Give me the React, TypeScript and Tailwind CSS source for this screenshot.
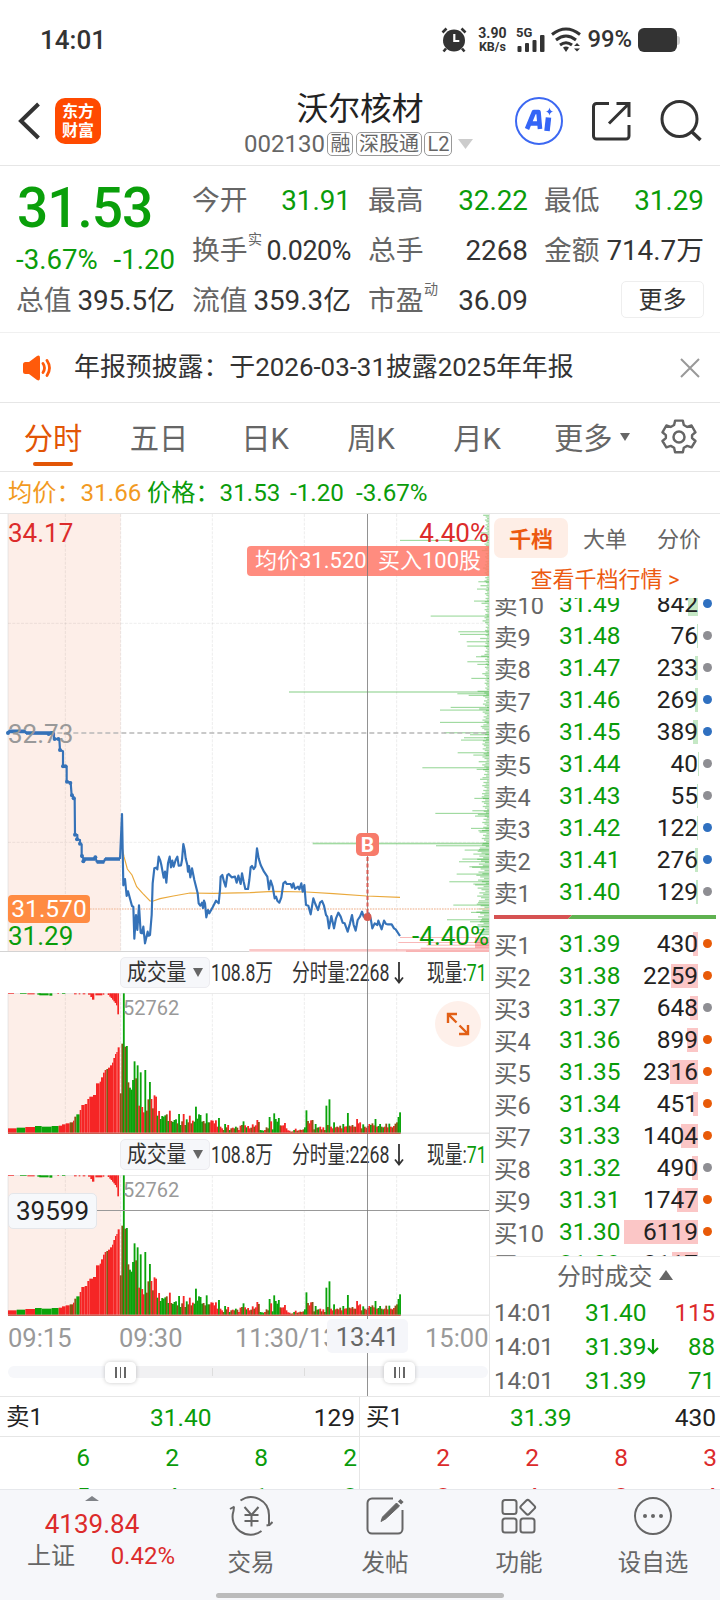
import { ReactNode } from "react";
import { clsx } from "clsx";

type Level = { label: string; price: string; vol: number; dot: "blue" | "gray" | "orange" };

const SELLS: Level[] = [
  { label: "卖10", price: "31.49", vol: 842, dot: "blue" },
  { label: "卖9", price: "31.48", vol: 76, dot: "gray" },
  { label: "卖8", price: "31.47", vol: 233, dot: "gray" },
  { label: "卖7", price: "31.46", vol: 269, dot: "blue" },
  { label: "卖6", price: "31.45", vol: 389, dot: "blue" },
  { label: "卖5", price: "31.44", vol: 40, dot: "gray" },
  { label: "卖4", price: "31.43", vol: 55, dot: "gray" },
  { label: "卖3", price: "31.42", vol: 122, dot: "blue" },
  { label: "卖2", price: "31.41", vol: 276, dot: "blue" },
  { label: "卖1", price: "31.40", vol: 129, dot: "gray" },
];

const BUYS: Level[] = [
  { label: "买1", price: "31.39", vol: 430, dot: "orange" },
  { label: "买2", price: "31.38", vol: 2259, dot: "orange" },
  { label: "买3", price: "31.37", vol: 648, dot: "gray" },
  { label: "买4", price: "31.36", vol: 899, dot: "orange" },
  { label: "买5", price: "31.35", vol: 2316, dot: "orange" },
  { label: "买6", price: "31.34", vol: 451, dot: "orange" },
  { label: "买7", price: "31.33", vol: 1404, dot: "orange" },
  { label: "买8", price: "31.32", vol: 490, dot: "gray" },
  { label: "买9", price: "31.31", vol: 1747, dot: "orange" },
  { label: "买10", price: "31.30", vol: 6119, dot: "orange" },
  { label: "买11", price: "31.29", vol: 2117, dot: "orange" },
];

const TRADES = [
  { time: "14:01", price: "31.40", vol: "115", up: true },
  { time: "14:01", price: "31.39", vol: "88", arrow: true },
  { time: "14:01", price: "31.39", vol: "71" },
];

// chart units are 3 per pixel
const PRE_LINE =
  "22,669 26,664 76,664 78,669 140,670 162,669 162,687 178,687 180,720 189,724 189,769 200,769 200,815 212,818 215,857 224,865 225,973 232,975 232,988 240,990 240,1001 245,1003 245,1039 250,1045 250,1055 257,1047 283,1047 286,1041 290,1055 312,1055 315,1047 360,1047";

const PRE_DOTS = [
  [24, 669], [146, 672], [155, 669], [164, 687], [175, 687], [180, 720], [189, 769], [196, 769], [201, 815], [211, 819],
  [216, 856], [221, 865], [225, 974], [231, 988], [240, 1001], [246, 1038], [250, 1054], [286, 1042],
];

const PRICE_LINE =
  "360,1047 366,912 370,1126 375,1107 380,1158 384,1144 396,1188 400,1190 403,1286 408,1215 412,1260 417,1186 422,1268 426,1270 430,1250 435,1300 443,1265 446,1277 450,1275 455,1215 458,1120 463,1075 468,1073 472,1078 476,1040 481,1052 484,1065 491,1103 495,1085 499,1118 504,1060 509,1040 513,1072 517,1052 521,1070 527,1050 532,1040 536,1067 543,1066 546,1050 550,1002 554,1020 557,1045 562,1065 564,1085 567,1068 571,1102 576,1075 583,1110 590,1138 593,1150 596,1180 601,1187 606,1178 609,1194 612,1172 615,1180 619,1222 624,1200 628,1210 638,1192 648,1172 656,1180 660,1140 662,1100 667,1095 672,1115 677,1130 682,1095 686,1092 695,1102 705,1100 710,1118 715,1097 722,1122 726,1090 731,1115 736,1137 744,1137 748,1110 752,1072 756,1068 761,1077 766,1070 771,1015 776,1045 782,1065 792,1085 802,1100 807,1138 812,1112 818,1130 824,1165 828,1160 832,1172 838,1178 844,1162 850,1120 856,1115 860,1122 872,1122 876,1133 880,1120 885,1137 894,1130 898,1138 904,1120 908,1145 913,1125 918,1185 925,1187 932,1213 940,1165 946,1182 954,1200 960,1178 966,1173 972,1187 978,1215 982,1220 987,1255 994,1218 1002,1255 1008,1225 1015,1208 1022,1220 1028,1238 1034,1240 1043,1265 1050,1240 1056,1215 1061,1245 1067,1262 1073,1230 1080,1220 1086,1205 1091,1220 1100,1222 1106,1210 1112,1225 1117,1255 1124,1240 1132,1245 1135,1232 1140,1245 1145,1258 1152,1232 1158,1242 1164,1243 1175,1243 1182,1255 1187,1258 1200,1278";

const AVG_LINE =
  "366,1010 372,1040 382,1077 396,1095 410,1130 428,1150 450,1173 460,1173 480,1166 520,1158 570,1149 640,1150 750,1148 820,1144 920,1146 1000,1151 1100,1158 1200,1162";

// [y, left edge] of the resting orders that stand out
const BIG_ORDERS = [
  [91, 480], [215, 715], [237, 711], [273, 702], [318, 572], [365, 655], [373, 660], [395, 680], [408, 682], [440, 708],
  [455, 682], [463, 712], [505, 694], [551, 652], [556, 686], [592, 632], [600, 600], [637, 600], [668, 612], [674, 690],
  [683, 672], [690, 663], [728, 653], [735, 700], [773, 547], [778, 710], [865, 703], [902, 697], [910, 586], [918, 705],
  [955, 693], [962, 715], [1007, 588], [1020, 674], [1032, 700], [1047, 667], [1055, 657], [1070, 688], [1092, 650],
  [1115, 628], [1122, 700], [1185, 640], [1207, 693], [1229, 621], [1235, 690], [1250, 700],
];

const VERTICALS = [196, 362, 637, 913, 1190];

// volume per minute: height and colour (r, g, or o where both overlap)
const VOLUME =
  "120o 269o 420g 260o 262g 153o 137g 131g 160g 216g 165o 204g 83r 183g 79r 63r 190g 68o 102o 154g 103r 75o 114r 110r 53g 67r 43g 52g 50g 54g 57o 37g 68r 37o 34g 40g 42g 30o 58g 25g 36o 58r 25o 42g 33o 53r 30o 38r 35g 80g 44g 57g 55g 35g 37o 30o 60g 33g 33o 39r 38r 30r 39r 20r 46g 20r 15r 10o 28g 18o 25r 10g 15o 17r 15o 20g 17o 10r 23r 25o 36g 24r 18g 22r 15r 17o 27r 20o 24r 40r 34o 10g 9g 8g 10r 18o 15o 49g 36r 12g 60g 43g 35g 46g 24o 23r 24r 31r 15r 9r 8r 5o 6r 10g 14r 8o 9r 11o 10r 12o 18g 69g 37o 30r 39r 40o 12o 28g 17o 18g 20r 12o 18r 10o 83g 25o 102g 20r 15r 33g 18r 20o 18r 23o 15r 28g 20r 21r 61g 23o 21r 25o 20r 20o 43r 30r 33r 15o 27g 20o 17r 22o 28r 25g 30o 24r 43g 20r 22g 28g 20o 18g 20r 29o 18r 29g 20r 18o 22r 29o 33o 49g 63g".split(" ");

// steps of the call auction area: x, height, colour
const AUCTION = [
  [24, 15, "r"], [50, 17, "g"], [76, 19, "r"], [105, 22, "g"], [125, 20, "g"], [155, 22, "g"], [176, 23, "r"], [186, 27, "r"],
  [197, 30, "r"], [209, 33, "o"], [219, 38, "r"], [223, 50, "o"], [229, 57, "g"], [239, 70, "r"], [244, 85, "r"], [254, 88, "r"],
  [262, 103, "r"], [268, 110, "r"], [279, 115, "r"], [288, 150, "r"], [299, 155, "r"], [303, 168, "r"], [309, 182, "r"],
  [314, 190, "r"], [319, 193, "o"], [324, 197, "r"], [330, 204, "r"], [336, 212, "r"], [340, 226, "r"], [345, 238, "r"],
  [349, 244, "r"], [353, 258, "r"], [359, 0, "r"],
] as const;

const UNMATCHED = [
  [24, 18, 2, "r"], [60, 20, 2, "g"], [82, 22, 3, "r"], [112, 10, 4, "g"], [118, 28, 6, "g"], [148, 9, 7, "g"], [172, 5, 2, "r"],
  [186, 10, 2, "g"], [222, 8, 3, "r"], [236, 5, 3, "r"], [248, 8, 3, "r"], [264, 8, 4, "r"], [271, 5, 11, "r"], [276, 7, 19, "r"],
  [286, 21, 6, "r"], [308, 5, 4, "r"], [323, 5, 5, "r"], [328, 5, 10, "r"], [332, 5, 14, "r"], [336, 5, 19, "r"], [340, 5, 24, "r"],
  [344, 5, 29, "r"], [348, 4, 36, "r"], [352, 5, 63, "r"],
] as const;

const FILL: Record<string, string> = { r: "#f52525", g: "#0aa30a", o: "#8a5214" };

function StatusBar() {
  return (
    <div className="flex h-[76px] items-center pt-1 text-[#333] font-medium">
      <span className="ml-[40px] text-[26px] leading-none">14:01</span>
      <div className="ml-auto mr-[40px] flex items-center">
        <svg width="26" height="26" viewBox="0 0 26 26" className="mr-[9px]">
          <circle cx="13" cy="13.5" r="11" fill="#333" />
          <path d="M1.5 5.5 5.5 1.5M24.5 5.5 20.5 1.5M5 21.5l-2.5 3M21 21.5l2.5 3" stroke="#333" strokeWidth="2.6" fill="none" />
          <path d="M13.3 7v7h5" stroke="#fff" strokeWidth="2.2" fill="none" />
        </svg>
        <div className="flex w-[32px] flex-col items-center font-bold">
          <span className="text-[14px] leading-[14px]">3.90</span>
          <span className="text-[12.5px] leading-[14px]">KB/s</span>
        </div>
        <svg width="30" height="28" viewBox="0 0 30 28" className="ml-[8px]">
          <text x="0" y="10.5" fontSize="13" fontWeight="700" fill="#333">5G</text>
          <rect x="1.5" y="20" width="4" height="6" rx="1" fill="#333" />
          <rect x="9" y="17" width="4" height="9" rx="1" fill="#333" />
          <rect x="16.5" y="14" width="4" height="12" rx="1" fill="#333" />
          <rect x="24" y="9" width="4.5" height="17" rx="1" fill="#333" />
        </svg>
        <svg width="30" height="26" viewBox="0 0 30 26" className="ml-[5px]" fill="none" stroke="#333" strokeWidth="3">
          <path d="M1 7.5Q15-3.5 29 7.5" />
          <path d="M5 13Q15 5 25 13" />
          <path d="M9 18q6-4.500 12 0" />
          <path d="M12 20.5q3-2 6 0L15 25zM23 19l3-3 3 3zM23 21.5l3 3 3-3z" fill="#333" stroke="none" />
        </svg>
        <span className="ml-[6px] text-[23.8px] leading-none">99%</span>
        <div className="ml-[6px] h-[24px] w-[39px] rounded-[6px] bg-[#333]" />
        <div className="h-[9px] w-[3px] rounded-r bg-[#ccc]" />
      </div>
    </div>
  );
}

function Badge({ children }: { children: ReactNode }) {
  return (
    <span className="flex h-[24px] items-center rounded-[5px] border border-[#999] px-[2px] text-[20px] leading-none">{children}</span>
  );
}

function Header() {
  return (
    <div className="flex h-[90px] border-b border-[#e6e6e6]">
      <div className="flex w-[244px] items-center pl-[18px]">
        <svg width="22" height="40" viewBox="0 0 22 40" className="mt-[1px]">
          <path d="M20.5 3 3 20l17.5 17" fill="none" stroke="#333" strokeWidth="4" />
        </svg>
        <div className="ml-[15px] flex h-[46px] w-[46px] flex-col items-center justify-center rounded-[10px] bg-[#ff4a00] text-[16px] font-bold leading-[19px] text-white">
          <span>东方</span>
          <span>财富</span>
        </div>
      </div>
      <div className="w-[234px]">
        <div className="-ml-[2px] mt-[15px] h-[36px] text-center text-[31.8px] leading-[36px] text-[#222]">沃尔核材</div>
        <div className="mt-[4px] flex h-[26px] items-center gap-[2.5px] whitespace-nowrap text-[24px] leading-none text-[#666]">
          <span>002130</span>
          <Badge>融</Badge>
          <Badge>深股通</Badge>
          <Badge>L2</Badge>
          <svg width="15" height="10" viewBox="0 0 15 10" className="ml-[3px]"><path d="M0 0h15L7.5 10z" fill="#ccc" /></svg>
        </div>
      </div>
      <div className="flex flex-1 items-center">
        <svg width="48" height="48" viewBox="0 0 48 48" className="ml-[37px]">
          <circle cx="24" cy="24" r="23" fill="#fff" stroke="#3c68f2" strokeWidth="2" />
          <path d="m12 32 7-17h4.5l1.5 17M14.5 26.5H24" stroke="#3465f6" strokeWidth="4.6" fill="none" strokeLinejoin="round" />
          <path d="M33.5 20.5 32 34" stroke="#3465f6" strokeWidth="5.5" />
          <path d="M34.5 10.5q.7 3.800 4 4-3.300.3-4 4-.7-3.700-4-4 3.300-.2 4-4z" fill="#3465f6" />
        </svg>
        <svg width="40" height="40" viewBox="0 0 40 40" className="ml-[29px]" fill="none" stroke="#333" strokeWidth="3">
          <path d="M17 2.5H4.500a3 3 0 0 0-3 3V35a3 3 0 0 0 3 3H34a3 3 0 0 0 3-3V24" />
          <path d="M24.5 2.5H37V16M37 2.5 17 22.5" />
        </svg>
        <svg width="42" height="42" viewBox="0 0 42 42" className="ml-[28px]" fill="none" stroke="#333" strokeWidth="3">
          <circle cx="19.5" cy="19" r="17.5" />
          <path d="m31 31 9.5 9" strokeWidth="3.5" />
        </svg>
      </div>
    </div>
  );
}

function Stat({ label, sup, value, green, narrow }: { label: string; sup?: string; value: string; green?: boolean; narrow?: boolean }) {
  return (
    <div className="flex h-[50px] items-center justify-between">
      <span className="relative text-[#666]">
        {label}
        {sup && <span className="absolute left-[56px] -top-[5px] text-[14px]">{sup}</span>}
      </span>
      <span className={clsx(green ? "text-[#0a9c0a]" : "text-[#333]", narrow && "text-[26.8px] tracking-[-0.4px]")}>{value}</span>
    </div>
  );
}

function Quote() {
  return (
    <div className="flex h-[167px] border-b border-[#f0f0f0] pl-[16px] pt-[10px] text-[27.8px] leading-none">
      <div className="mr-[17px] w-[159px]">
        <div className="h-[67px] pl-px text-[55px] font-medium leading-[65px] tracking-[-1px] text-[#0a9f0a]">31.53</div>
        <div className="flex h-[33px] items-center justify-between text-[27.6px] text-[#0a9c0a]">
          <span>-3.67%</span>
          <span>-1.20</span>
        </div>
        <Stat label="总值" value="395.5亿" />
      </div>
      <div className="mr-[17px] w-[159px]">
        <Stat label="今开" value="31.91" green />
        <Stat label="换手" sup="实" value="0.020%" narrow />
        <Stat label="流值" value="359.3亿" />
      </div>
      <div className="mr-[16px] w-[160px]">
        <Stat label="最高" value="32.22" green />
        <Stat label="总手" value="2268" />
        <Stat label="市盈" sup="动" value="36.09" />
      </div>
      <div className="w-[160px]">
        <Stat label="最低" value="31.29" green />
        <Stat label="金额" value="714.7万" />
        <div className="ml-auto mt-[5px] flex h-[37px] w-[83px] items-center justify-center rounded-[5px] border border-[#eee] text-[24px] text-[#333]">更多</div>
      </div>
    </div>
  );
}

function Notice() {
  return (
    <div className="flex h-[70px] items-center border-b border-[#e6e6e6] pl-[22px] pr-[20px] text-[#333]">
      <svg width="31" height="26" viewBox="0 0 31 26">
        <path d="M3.500 7H7l8-6q3-1.500 3 2v20q0 3.500-3 2L7 19H3.500Q1 19 1 16.500v-7Q1 7 3.500 7z" fill="#ff5a0a" />
        <path d="M21 8.500q3 4.500 0 9M25 5.500q5 7.500 0 15" fill="none" stroke="#ff5a0a" strokeWidth="2.800" strokeLinecap="round" />
      </svg>
      <span className="ml-[21px] text-[25.9px] leading-none">年报预披露：于2026-03-31披露2025年年报</span>
      <svg width="20" height="20" viewBox="0 0 20 20" className="ml-auto" stroke="#999" strokeWidth="2"><path d="m1 1 18 18M19 1 1 19" /></svg>
    </div>
  );
}

function Tabs() {
  return (
    <div className="flex h-[69px] items-center border-b border-[#e6e6e6] text-[29.3px] leading-none text-[#666]">
      {["分时", "五日", "日K", "周K", "月K"].map((t, i) => (
        <div key={t} className={clsx("relative flex h-full w-[106px] items-center justify-center pt-[5px]", i === 0 && "text-[#e25506]")}>
          {t}
          {i === 0 && <span className="absolute bottom-[5px] left-[33px] h-[4px] w-[40px] rounded-full bg-[#e25506]" />}
        </div>
      ))}
      <span className="ml-[24px] pt-[5px]">更多</span>
      <svg width="10" height="8" viewBox="0 0 10 8" className="ml-[7px]"><path d="M0 0h10L5 8z" fill="#666" /></svg>
      <svg width="36" height="36" viewBox="0 0 36 36" className="ml-[31px]" fill="none" stroke="#666" strokeWidth="2.500" strokeLinejoin="round">
        <path d="M14 2h8l1 4.500 3.500 2L31 7l4 7-3.500 3v3l3.500 3-4 6.500-4.500-1.500L23 30l-1 4.500h-8L13 30l-3.500-2L5 29.500 1 23l3.500-3v-3L1 14l4-7 4.500 1.500 3.500-2z" transform="translate(.5 -.3) scale(.97)" />
        <circle cx="18" cy="18" r="5.500" />
      </svg>
    </div>
  );
}

function Grid({ top, bottom }: { top: number; bottom: number }) {
  return (
    <>
      <rect x="24" y={top} width="338" height={bottom - top} fill="#fdeee8" />
      {VERTICALS.map((x) => (
        <line key={x} x1={x} x2={x} y1={top} y2={bottom} stroke="#000" strokeOpacity="0.09" strokeWidth="2.500" strokeDasharray="9 4" />
      ))}
      <line x1="24" x2="24" y1={top} y2={bottom} stroke="#ddd" strokeWidth="2" />
    </>
  );
}

function PriceChart() {
  const small: ReactNode[] = [];
  for (let i = 0; i < 265; i++) {
    const y = 14 + i * 4.8;
    if (y > 1276) break;
    const base = y > 1000 ? 28 : y > 800 ? 16 : y > 540 ? 15 : 10;
    const w = base * (0.35 + (((i * 37) % 23) / 23) * 1.05) + ((i * 13) % 11 === 0 ? 14 : 0);
    small.push(<rect key={i} x={1467 - w} y={y} width={w} height="3.800" />);
  }
  return (
    <div className="relative h-[438px]">
      <svg width="490" height="438" viewBox="0 12 1470 1314" className="block">
        <Grid top={12} bottom={1324} />
        <path d="M24 340H1467M24 997H1467" stroke="#000" strokeOpacity="0.07" strokeWidth="3" strokeDasharray="9 4" />
        <g fill="#1fa61f" fillOpacity="0.42">
          {small}
          {BIG_ORDERS.map(([y, x]) => (
            <rect key={y} x={x + 720} y={y - 1.5} width={747 - x} height="3.500" />
          ))}
          <rect x="867" y="543" width="600" height="6" fillOpacity="0.28" />
          <rect x="938" y="998" width="529" height="5" fillOpacity="0.42" />
        </g>
        <g fill="#ee4444" fillOpacity="0.38">
          <rect x="1200" y="1281" width="267" height="3" />
          <rect x="1195" y="1296" width="272" height="3" />
          <rect x="1280" y="1304" width="187" height="3" />
          <rect x="1425" y="1284" width="42" height="30" />
          <rect x="1262" y="1313" width="205" height="4" />
          <rect x="748" y="1317" width="719" height="8" fillOpacity="0.3" />
          <rect x="1218" y="1322" width="249" height="3" />
        </g>
        <line x1="172" x2="1467" y1="669" y2="669" stroke="#b8b8b8" strokeWidth="4" strokeDasharray="15 9" />
        <line x1="270" x2="1467" y1="1197" y2="1197" stroke="#f3c8ae" strokeWidth="5" strokeDasharray="5 3" />
        <polyline points={AVG_LINE} fill="none" stroke="#eaa93c" strokeWidth="3.500" />
        <polyline points={PRE_LINE} fill="none" stroke="#3572b8" strokeWidth="6.500" strokeLinejoin="round" />
        <path d="M26 664H76M78 669H160M250 1047H285M290 1056H313M315 1047H360" stroke="#3572b8" strokeWidth="11" />
        {PRE_DOTS.map(([x, y]) => (
          <circle key={`${x}-${y}`} cx={x} cy={y} r="6" fill="#3572b8" />
        ))}
        <polyline points={PRICE_LINE} fill="none" stroke="#3572b8" strokeWidth="6.500" strokeLinejoin="round" />
        <path d="M0 1325H748" stroke="#ccc" strokeWidth="3" />
      </svg>
      <span className="absolute left-[8px] top-[5px] text-[26px] leading-[28px] text-[#dc2b2b]">34.17</span>
      <span className="absolute left-[8px] top-[206px] text-[26px] leading-[28px] text-[#999]">32.73</span>
      <span className="absolute left-[8px] top-[381px] flex h-[28px] w-[82px] items-center justify-center rounded-[4px] bg-[#ff8b42] text-[24.5px] text-white">31.570</span>
      <span className="absolute left-[8px] top-[408px] text-[26px] leading-[28px] text-[#0a9c0a]">31.29</span>
      <span className="absolute right-0 top-[5px] text-[26px] leading-[28px] text-[#dc2b2b]">4.40%</span>
      <span className="absolute right-0 top-[408px] text-[26px] leading-[28px] text-[#0a9c0a]">-4.40%</span>
      <div className="absolute right-0 top-[32px] flex h-[30px] w-[242px] items-center justify-between whitespace-nowrap rounded-l-[4px] bg-[#ff7868]/85 pl-[8px] pr-[8px] text-[22px] leading-none text-white">
        <span>均价31.520</span>
        <span>买入100股</span>
      </div>
    </div>
  );
}

function VolumeChart() {
  return (
    <svg width="490" height="141" viewBox="0 129 1470 423" className="block">
      <Grid top={130} bottom={549} />
      <path d="M24 130H1467" stroke="#e6e6e6" strokeWidth="3" />
      {AUCTION.slice(0, -1).map(([x, h, c], i) => (
        <rect key={x} x={x} y={550 - h} width={AUCTION[i + 1][0] - x} height={h} fill={FILL[c]} />
      ))}
      {UNMATCHED.map(([x, w, h, c]) => (
        <rect key={x} x={x} y={130} width={w} height={h} fill={FILL[c]} />
      ))}
      {VOLUME.map((v, i) => {
        const h = parseInt(v);
        return <rect key={i} x={359.5 + i * 4.604} y={550 - h} width="5.5" height={h} fill={FILL[v.slice(-1)]} />;
      })}
      <path d="M24 549.5H1467" stroke="#ddd" strokeWidth="3" />
      <path d="M24 550H1202" stroke="#c34a3a" strokeWidth="3" />
    </svg>
  );
}

function VolumeHead() {
  return (
    <div className="flex h-[41px] items-center whitespace-nowrap text-[24px] leading-none text-[#333]">
      <div className="ml-[120px] flex h-[31px] w-[90px] items-center rounded-[5px] border border-[#ececf0] bg-[#f6f7fa] pl-[6px]">
        <span className="w-[66px] origin-left scale-x-[0.86] text-[23px]">成交量</span>
        <svg width="10" height="9" viewBox="0 0 10 9"><path d="M0 0h10L5 9z" fill="#666" /></svg>
      </div>
      <span className="ml-px w-[80.5px] origin-left scale-x-[0.735]">108.8万</span>
      <span className="w-[102.5px] origin-left scale-x-[0.74]">分时量:2268</span>
      <svg width="10" height="23" viewBox="0 0 10 23" className="mr-[22.5px]" fill="none" stroke="#333" strokeWidth="1.800"><path d="M5 1v20M1 16.500 5 21.500 9 16.500" /></svg>
      <span className="w-[62px] origin-left scale-x-[0.74]">现量:<span className="text-[#0a9c0a]">71</span></span>
    </div>
  );
}

function Handle() {
  return (
    <div className="flex h-[21px] w-[31px] items-center justify-center gap-[3px] rounded-[5px] bg-white shadow-[0_0_4px_rgba(0,0,0,0.22)]">
      <i className="h-[11px] w-[1.5px] bg-[#666]" />
      <i className="h-[11px] w-[1.5px] bg-[#666]" />
      <i className="h-[11px] w-[1.5px] bg-[#666]" />
    </div>
  );
}

function Charts() {
  return (
    <div className="relative h-full w-[490px] border-r border-[#e6e6e6]">
      <PriceChart />
      <VolumeHead />
      <div className="relative">
        <VolumeChart />
        <span className="absolute left-[123px] top-[5px] text-[20px] leading-[20px] text-[#999]">52762</span>
        <div className="absolute right-[8px] top-[8px] flex h-[46px] w-[46px] items-center justify-center rounded-full bg-[#fef0ea]">
          <svg width="24" height="24" viewBox="0 0 24 24" fill="none" stroke="#e25f16" strokeWidth="2.400"><path d="M2 11V2h9M2 2l8.500 8.500M22 13v9h-9M22 22l-8.500-8.500" /></svg>
        </div>
      </div>
      <VolumeHead />
      <div className="relative">
        <VolumeChart />
        <span className="absolute left-[123px] top-[5px] text-[20px] leading-[20px] text-[#999]">52762</span>
        <div className="absolute left-[8px] right-0 top-[35px] h-px bg-[#999]" />
        <div className="absolute left-[8px] top-[18px] flex h-[36px] w-[89px] items-center justify-center rounded-[5px] border border-[#e4e6ea] bg-[#f6f8fb] text-[26px] leading-none text-[#222]">39599</div>
      </div>
      {/* time axis */}
      <div className="flex h-[42px] items-center pt-[3px] text-[25.5px] leading-none text-[#999]">
        <span className="ml-[8px] w-[111px]">09:15</span>
        <span className="w-[116px]">09:30</span>
        <span className="w-[190px]">11:30/13:00</span>
        <span>15:00</span>
      </div>
      <div className="relative ml-[8px] mt-[8px] h-[12px] w-[480px] rounded-full bg-[#f6f7fa]">
        <div className="absolute left-[112px] top-0 h-[12px] w-[271px] bg-[#f1f1f3]" />
        <i className="absolute left-[204px] top-[2px] h-[8px] w-px bg-[#ddd]" />
        <i className="absolute left-[296px] top-[2px] h-[8px] w-px bg-[#ddd]" />
        <div className="absolute -top-[4px] left-[97px]"><Handle /></div>
        <div className="absolute -top-[4px] left-[376px]"><Handle /></div>
      </div>
      {/* crosshair */}
      <div className="absolute bottom-0 left-[367px] top-0 w-px bg-[#777]/80" />
      <div className="absolute left-[327px] top-[805px] flex h-[34px] w-[81px] items-center justify-center rounded-[5px] bg-[#f5f6fa] pt-[3px] text-[25.5px] leading-none text-[#666]">13:41</div>
      <svg width="24" height="90" viewBox="0 0 24 90" className="absolute left-[356px] top-[319px]">
        <path d="M11.5 24v58" stroke="#d65a50" strokeWidth="2" strokeDasharray="4 2.500" />
        <circle cx="11.5" cy="84" r="4" fill="#d65a50" />
        <rect x="0" y="0" width="23" height="23" rx="5" fill="#f77b6b" />
        <text x="11.5" y="19" fontSize="21" fontWeight="700" textAnchor="middle" fill="#fff">B</text>
      </svg>
    </div>
  );
}

function BookRow({ level, side }: { level: Level; side: "sell" | "buy" }) {
  return (
    <div className="flex h-[32px] items-center">
      <span className="mt-[6px] w-[65px] text-[23.5px] text-[#666]">{level.label}</span>
      <span className="mt-px w-[64px] text-[24.5px] text-[#0a9c0a]">{level.price}</span>
      <span className="relative flex h-[24px] w-[75px] items-center justify-end text-[24.5px] text-[#222]">
        <span
          className={clsx("absolute right-0 top-0 h-full", side === "sell" ? "bg-[#c5e8c5]" : "bg-[#fbc6c6]")}
          style={{ width: level.vol / 82.7 }}
        />
        <span className="relative mt-px">{level.vol}</span>
      </span>
      <span
        className={clsx(
          "mb-[2px] ml-[5px] h-[9px] w-[9px] rounded-full",
          level.dot === "blue" && "bg-[#2f70c0]",
          level.dot === "gray" && "bg-[#8e8e93]",
          level.dot === "orange" && "bg-[#e85a08]",
        )}
      />
    </div>
  );
}

function OrderBook() {
  return (
    <div className="flex w-[230px] flex-col leading-none">
      <div className="mt-[4px] flex h-[40px] shrink-0 items-center pl-[4px] text-[22px] text-[#666]">
        <span className="flex h-full w-[74px] items-center justify-center rounded-[7px] bg-[#feeee6] pt-[3px] font-bold text-[#ec5a10]">千档</span>
        <span className="ml-[15px] pt-[3px]">大单</span>
        <span className="ml-[30px] pt-[3px]">分价</span>
      </div>
      <div className="flex h-[40px] shrink-0 items-center justify-center whitespace-nowrap pt-[3px] text-[22px] text-[#ec5a10]">查看千档行情 &gt;</div>
      <div className="h-[658px] shrink-0 overflow-hidden pl-[4px]">
        <div className="-mt-[10px]">
          {SELLS.map((l) => <BookRow key={l.label} level={l} side="sell" />)}
        </div>
        <svg width="222" height="4" viewBox="0 0 222 4" className="mb-[9px] mt-[7px] block">
          <path d="M0 0h78l-4 4H0z" fill="#d65252" />
          <path d="M78 0h144v4H74z" fill="#5fb150" />
        </svg>
        {BUYS.map((l) => <BookRow key={l.label} level={l} side="buy" />)}
      </div>
      <div className="flex h-[39px] shrink-0 items-center border-t border-[#eee] pl-[67px] pt-[3px] text-[23.8px] text-[#666]">
        分时成交
        <svg width="14" height="10" viewBox="0 0 14 10" className="mb-[5px] ml-[7px]"><path d="M7 0l7 10H0z" fill="#666" /></svg>
      </div>
      {TRADES.map((t, i) => (
        <div key={i} className="flex h-[34px] shrink-0 items-center pl-[4px] pr-[5px] pt-[2px] text-[24px]">
          <span className="w-[91px] text-[#666]">{t.time}</span>
          <span className="flex items-center text-[24.5px] text-[#0a9c0a]">
            {t.price}
            {t.arrow && (
              <svg width="12" height="16" viewBox="0 0 12 16" fill="none" stroke="#0a9c0a" strokeWidth="2.200"><path d="M6 0v14M1 9l5 5 5-5" /></svg>
            )}
          </span>
          <span className={clsx("ml-auto", t.up ? "text-[#dc2b2b]" : "text-[#0a9c0a]")}>{t.vol}</span>
        </div>
      ))}
    </div>
  );
}

function BestQueue({ label, price, vol, rows, red }: { label: string; price: string; vol: string; rows: string[][]; red?: boolean }) {
  return (
    <div className={clsx("h-full w-[360px] text-[24.5px] leading-none", !red && "border-r border-[#e6e6e6]")}>
      <div className="flex h-[40px] items-center border-b border-[#e6e6e6] pl-[6px] pt-[3px] text-[#222]">
        <span className="w-[144px] text-[23.5px]">{label}</span>
        <span className="text-[#0a9c0a]">{price}</span>
        <span className="ml-auto pr-[4px]">{vol}</span>
      </div>
      {rows.map((r, i) => (
        <div key={i} className={clsx("flex h-[39px] items-center pl-px pt-[3px]", red ? "text-[#dc2b2b]" : "text-[#0a9c0a]")}>
          {r.map((n, j) => <span key={j} className="w-[89px] text-right">{n}</span>)}
        </div>
      ))}
    </div>
  );
}

function NavItem({ label, children }: { label: string; children: ReactNode }) {
  return (
    <div className="flex w-[134px] flex-col items-center pt-[5px]">
      <svg width="44" height="42" viewBox="0 0 44 42" fill="none" stroke="#666" strokeWidth="2">{children}</svg>
      <span className="mt-[14px] text-[23.5px] leading-[24px]">{label}</span>
    </div>
  );
}

function BottomNav() {
  return (
    <div className="relative flex h-[111px] border-t border-[#e6e8ec] bg-[#f6f7fa] text-[#666]">
      <div className="w-[184px] text-[#dc2b2b]">
        <svg width="14" height="5" viewBox="0 0 14 5" className="ml-[85px] mt-[6px] block"><path d="M0 5 7 0l7 5z" fill="#808388" /></svg>
        <div className="mt-[10px] text-center text-[26px] leading-[26px]">4139.84</div>
        <div className="mt-[6px] flex items-center justify-between pl-[27px] pr-[9px] text-[24px] leading-[26px]">
          <span className="text-[#666]">上证</span>
          <span>0.42%</span>
        </div>
      </div>
      <NavItem label="交易">
        <path d="M11.500 5.500A18 18 0 0 1 40 20v10M40 30l-2.500.5M32.500 36A18 18 0 0 1 4.500 16l.5-4M40 30.500 43.500 27M5.500 11.500 1 14" />
        <path d="m15.500 12 7 8 7-8M22.500 20v11.500M15.500 20h14M15.500 26h14" />
      </NavItem>
      <NavItem label="发帖">
        <path d="M30 3.500H9A4.500 4.500 0 0 0 4.500 8v26A4.500 4.500 0 0 0 9 38.500h26a4.500 4.500 0 0 0 4.500-4.500V15" />
        <path d="m18 26.500 1.500-4.500L33.500 8l3 3L22.500 24z" fill="#666" strokeWidth="1" />
        <path d="m36.500 8 2.500-2.500" strokeWidth="4.500" />
      </NavItem>
      <NavItem label="功能">
        <rect x="5.500" y="5" width="14" height="14" rx="2.500" />
        <rect x="5.500" y="23.500" width="14" height="14" rx="2.500" />
        <rect x="23.500" y="23.500" width="14" height="14" rx="2.500" />
        <rect x="25" y="6.500" width="11.500" height="11.500" rx="2" transform="rotate(45 30.750 12.250)" />
      </NavItem>
      <NavItem label="设自选">
        <circle cx="22" cy="21" r="18" />
        <g fill="#666" stroke="none">
          <circle cx="14" cy="21" r="2" />
          <circle cx="22" cy="21" r="2" />
          <circle cx="30" cy="21" r="2" />
        </g>
      </NavItem>
      <div className="absolute bottom-[2px] left-[216px] h-[5px] w-[288px] rounded-full bg-[#bbb]" />
    </div>
  );
}

export default function App() {
  return (
    <div className="h-[1600px] w-[720px] overflow-hidden bg-white font-[Roboto,'Noto_Sans_CJK_SC',sans-serif]">
      <StatusBar />
      <Header />
      <Quote />
      <Notice />
      <Tabs />
      <div className="flex h-[42px] items-center whitespace-pre border-b border-[#e6e6e6] pl-[8px] pt-px text-[24.2px] leading-none text-[#0a9c0a]">
        <span className="w-[139px] text-[#f29a1f]">均价：31.66</span>
        <span className="w-[143px]">价格：31.53</span>
        <span className="w-[66px]">-1.20</span>
        <span>-3.67%</span>
      </div>
      <div className="flex h-[883px] border-b border-[#e6e6e6]">
        <Charts />
        <OrderBook />
      </div>
      <div className="flex h-[92px] overflow-hidden">
        <BestQueue label="卖1" price="31.40" vol="129" rows={[["6", "2", "8", "2"], ["5", "4", "1", "8"]]} />
        <BestQueue label="买1" price="31.39" vol="430" rows={[["2", "2", "8", "3"], ["8", "4", "8", "4"]]} red />
      </div>
      <BottomNav />
    </div>
  );
}
